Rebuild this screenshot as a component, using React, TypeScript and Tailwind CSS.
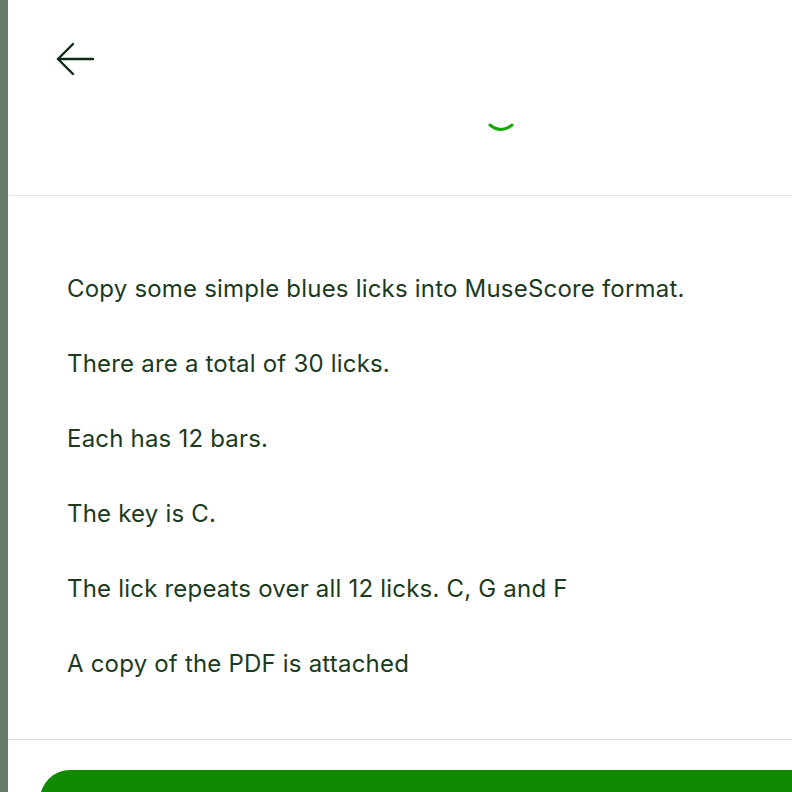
export default function App() {
  const lines = [
    "Copy some simple blues licks into MuseScore format.",
    "There are a total of 30 licks.",
    "Each has 12 bars.",
    "The key is C.",
    "The lick repeats over all 12 licks. C, G and F",
    "A copy of the PDF is attached",
  ];

  return (
    <div className="flex h-[792px] w-[792px] overflow-hidden bg-[#667a6a]" style={{ fontFamily: 'Inter, "Liberation Sans", Arial, sans-serif' }}>
      <div className="ml-[8px] flex flex-1 flex-col overflow-hidden bg-white">
        {/* header */}
        <div className="relative h-[196px] shrink-0 border-b border-[#e4e8e4]">
          <button className="absolute left-[48px] top-[42px] text-[#0d2a12]">
            <svg width="38" height="34" viewBox="0 0 38 34" fill="none" stroke="currentColor" strokeWidth="2.4" strokeLinecap="round" strokeLinejoin="round">
              <path d="M37 17H2" />
              <path d="M17 2L2 17l15 15" />
            </svg>
          </button>
          <svg className="absolute left-[473px] top-[92px]" width="40" height="40" viewBox="0 0 40 40" fill="none">
            <path d="M9 33 Q20 42 31 33" stroke="#14a800" strokeWidth="3" strokeLinecap="round" />
          </svg>
        </div>

        {/* description */}
        <div className="flex h-[544px] shrink-0 flex-col gap-[46px] border-b border-[#d5e0db] pl-[59px] pt-[78px]">
          {lines.map((l, i) => (
            <p key={i} className="h-[29px] text-[24px] leading-[29px] tracking-[0.2px] text-[#1b3a1e]">{l}</p>
          ))}
        </div>

        {/* action */}
        <div className="pl-[32px] pt-[30px]">
          <div className="h-[60px] rounded-l-[30px] bg-[#108a00]" />
        </div>
      </div>
    </div>
  );
}
